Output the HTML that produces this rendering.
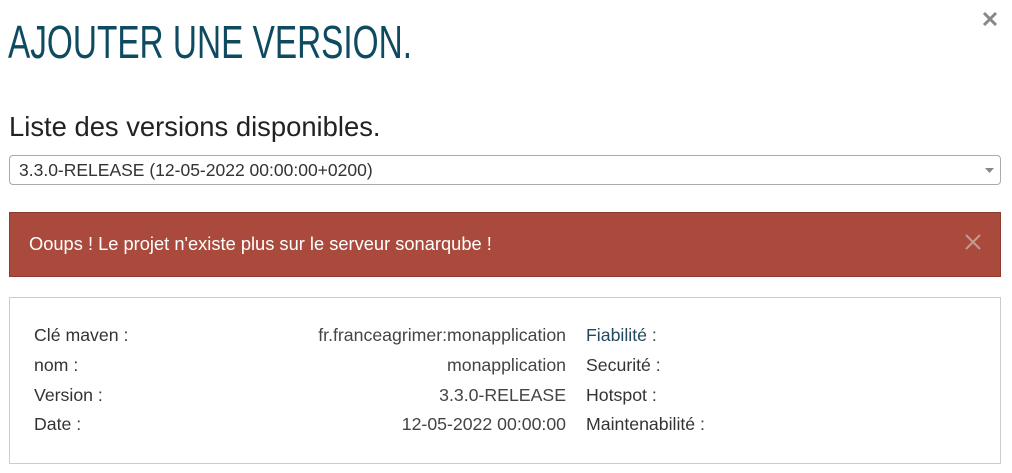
<!DOCTYPE html>
<html><head><meta charset="utf-8"><style>
*{margin:0;padding:0;box-sizing:border-box}
body{width:1012px;height:473px;background:#fff;position:relative;overflow:hidden;font-family:"Liberation Sans",sans-serif;color:#333}
.title{position:absolute;left:8px;top:15px;font-family:"Liberation Sans Narrow","Liberation Sans",sans-serif;font-size:46px;color:#0e4b61;letter-spacing:0px;transform:scaleX(0.725);transform-origin:left;white-space:nowrap;font-weight:normal}
.close{position:absolute;left:982px;top:11px}
.sub{position:absolute;left:9px;top:111px;font-size:27.4px;color:#222}
.sel{position:absolute;left:9px;top:155px;width:992px;height:30px;border:1px solid #aaa;border-radius:4px;font-size:17.5px;padding:4px 9px;color:#333}
.sel svg{position:absolute;right:6px;top:12px}
.alert{position:absolute;left:9px;top:212px;width:992px;height:65px;background:#a94a3c;border:1px solid #8e3b2f;color:#fff;font-size:18.3px;padding:20px 19px}
.alert svg{position:absolute;left:955px;top:21px}
.panel{position:absolute;left:9px;top:297px;width:992px;height:167px;border:1px solid #ccc}
.r{position:absolute;font-size:17.7px;color:#333;white-space:nowrap}
.v{text-align:right;width:400px;left:156px;color:#444}
</style></head><body>
<div class="title">AJOUTER UNE VERSION.</div>
<svg class="close" width="16" height="16" viewBox="0 0 16 16"><path d="M2 2L14 14M14 2L2 14" stroke="#888" stroke-width="3"/></svg>
<div class="sub">Liste des versions disponibles.</div>
<div class="sel">3.3.0-RELEASE (12-05-2022 00:00:00+0200)<svg width="9" height="5"><path d="M0 0H9L4.5 5Z" fill="#888"/></svg></div>
<div class="alert">Ooups ! Le projet n'existe plus sur le serveur sonarqube !<svg width="16" height="16"><path d="M1 1L15 15M15 1L1 15" stroke="#c49a92" stroke-width="2"/></svg></div>
<div class="panel">
<div class="r" style="left:24px;top:27px">Clé maven :</div>
<div class="r v" style="top:27px">fr.franceagrimer:monapplication</div>
<div class="r" style="left:576px;top:27px;color:#23495c">Fiabilité :</div>
<div class="r" style="left:24px;top:57px">nom :</div>
<div class="r v" style="top:57px">monapplication</div>
<div class="r" style="left:576px;top:57px">Securité :</div>
<div class="r" style="left:24px;top:87px">Version :</div>
<div class="r v" style="top:87px">3.3.0-RELEASE</div>
<div class="r" style="left:576px;top:87px">Hotspot :</div>
<div class="r" style="left:24px;top:116px">Date :</div>
<div class="r v" style="top:116px">12-05-2022 00:00:00</div>
<div class="r" style="left:576px;top:116px">Maintenabilité :</div>
</div>
</body></html>
